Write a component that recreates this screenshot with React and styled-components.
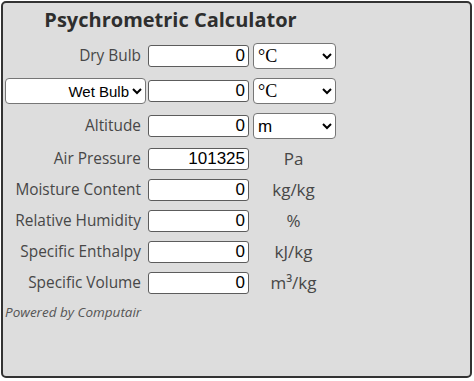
import React from "react";
import styled, { createGlobalStyle } from "styled-components";

const GlobalStyle = createGlobalStyle`
  body {
    margin: 0;
    font-family: "Open Sans", "Liberation Sans", sans-serif;
  }
`;

const rows = [
  { label: "Dry Bulb", value: "0", units: ["°C", "°F"], serif: true },
  { picker: ["Wet Bulb", "Dew Point"], value: "0", units: ["°C", "°F"], serif: true },
  { label: "Altitude", value: "0", units: ["m", "ft"] },
  { label: "Air Pressure", value: "101325", unit: "Pa" },
  { label: "Moisture Content", value: "0", unit: "kg/kg" },
  { label: "Relative Humidity", value: "0", unit: "%" },
  { label: "Specific Enthalpy", value: "0", unit: "kJ/kg" },
  { label: "Specific Volume", value: "0", unit: "m³/kg" },
];

const App = () => {
  return (
    <>
      <GlobalStyle />
      <Panel>
        <Title>Psychrometric Calculator</Title>
        <Form>
          {rows.map((r, i) => (
            <Row key={i} $tall={!!(r.units || r.picker)}>
              {r.picker ? (
                <Select $wide defaultValue={r.picker[0]}>
                  {r.picker.map((p) => (
                    <option key={p}>{p}</option>
                  ))}
                </Select>
              ) : (
                <Label>{r.label}</Label>
              )}
              <Input type="text" defaultValue={r.value} />
              {r.units ? (
                <Select $serif={r.serif} defaultValue={r.units[0]}>
                  {r.units.map((u) => (
                    <option key={u}>{u}</option>
                  ))}
                </Select>
              ) : (
                <Unit>{r.unit}</Unit>
              )}
            </Row>
          ))}
        </Form>
        <Credit>Powered by Computair</Credit>
      </Panel>
    </>
  );
};
export default App;

const Panel = styled.div`
  box-sizing: border-box;
  margin: 1px;
  width: 471px;
  height: 377px;
  background: #dddddd;
  border: 2px solid #333;
  border-radius: 5px;
  padding: 5px 2px 0;
`;

const Title = styled.h1`
  width: 331px;
  margin: 0 0 11px;
  text-align: center;
  font-size: 20px;
  line-height: 24px;
  font-weight: 700;
  color: #2e2e2e;
`;

const Form = styled.div`
  width: 331px;
  display: flex;
  flex-direction: column;
  gap: 9px;
`;

const Row = styled.div`
  display: grid;
  grid-template-columns: 141px 101px 83px;
  column-gap: 2px;
  align-items: center;
  height: ${(p) => (p.$tall ? "26px" : "22px")};
`;

const Label = styled.span`
  text-align: right;
  padding-right: 5px;
  font-size: 15.4px;
  line-height: 20px;
  color: #474747;
  white-space: nowrap;
`;

const Input = styled.input`
  box-sizing: border-box;
  width: 101px;
  height: 22px;
  border: 1px solid #5c5c5c;
  border-radius: 3px;
  background: #fff;
  padding: 0 3px;
  text-align: right;
  font-family: "Liberation Sans", Arial, sans-serif;
  font-size: 17px;
  color: #000;
`;

const Select = styled.select`
  box-sizing: border-box;
  width: ${(p) => (p.$wide ? "141px" : "83px")};
  margin-left: ${(p) => (p.$wide ? "0" : "2px")};
  height: 26px;
  border: 1px solid #767676;
  border-radius: 4px;
  background: #fff;
  color: #000;
  font-family: ${(p) => (p.$serif ? '"Liberation Serif", serif' : '"Liberation Sans", Arial, sans-serif')};
  font-size: ${(p) => (p.$serif ? "18px" : p.$wide ? "15px" : "17px")};
  text-align: ${(p) => (p.$wide ? "right" : "left")};
  text-align-last: ${(p) => (p.$wide ? "right" : "left")};
`;

const Unit = styled.span`
  margin-left: 2px;
  text-align: center;
  font-size: 17px;
  line-height: 20px;
  color: #474747;
`;

const Credit = styled.p`
  margin: 9px 0 0 0;
  font-size: 13.5px;
  font-style: italic;
  color: #555;
`;
